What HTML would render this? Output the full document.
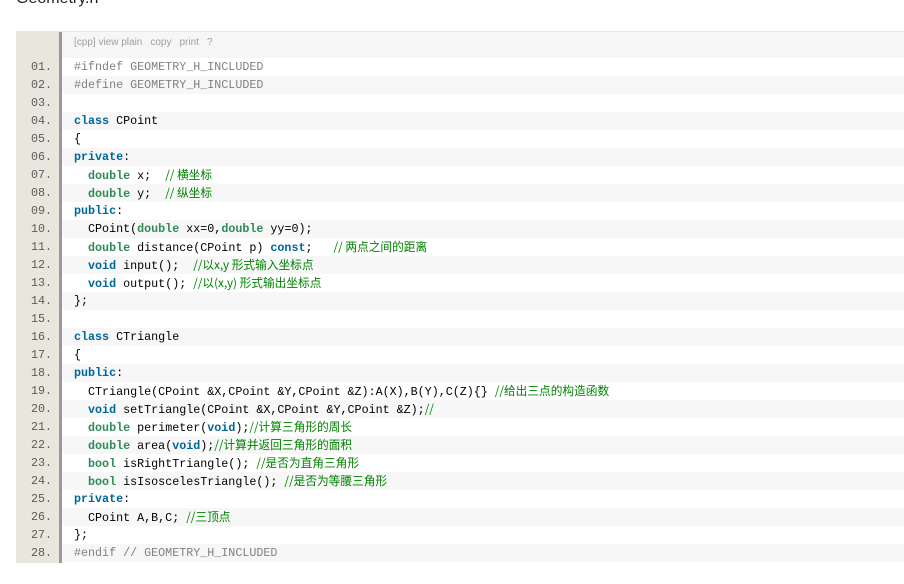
<!DOCTYPE html>
<html><head><meta charset="utf-8"><style>
body{margin:0;background:#fff;width:904px;height:584px;overflow:hidden;position:relative;font-family:"Liberation Sans",sans-serif}
.t{position:absolute;left:16px;top:-10px;font-size:16px;color:#222}
.blk{position:absolute;left:16px;top:31px;width:900px;border-top:1px solid #eeeadb}
.gut{position:absolute;left:0;top:0;width:43px;height:531px;background:#e8e6dd;border-right:3px solid #999;z-index:2}
.bar{height:26px;background:#f6f6f7;padding-left:58px;font-size:10px;color:#a0a0a0;line-height:22px}
.bar span{margin-right:8px}
.l{height:18px;line-height:18px;position:relative;margin-left:46px;font-family:"Liberation Mono","Noto Sans CJK SC",monospace;font-size:11.7px;color:#000;white-space:pre;background:#fff}
.l:nth-child(even){background:#f7f7f7}
.n{position:absolute;left:-46px;width:36px;text-align:right;color:#5c5c5c;z-index:3}
.c{position:absolute;left:12px}
.k{color:#069;font-weight:bold}
.d{color:#2e8b57;font-weight:bold}
.m{color:#008200;font-family:"Noto Sans CJK SC","Liberation Mono",sans-serif}
.p{color:#808080}
</style></head><body>
<div class="t">Geometry.h</div>
<div class="blk"><div class="gut"></div>
<div style="position:relative">
<div class="bar"><span>[cpp] view plain</span><span>copy</span><span>print</span><span>?</span></div>
<div>
<div class="l"><span class="n">01.</span><span class="c p">#ifndef GEOMETRY_H_INCLUDED</span></div>
<div class="l"><span class="n">02.</span><span class="c p">#define GEOMETRY_H_INCLUDED</span></div>
<div class="l"><span class="n">03.</span><span class="c"></span></div>
<div class="l"><span class="n">04.</span><span class="c"><span class="k">class</span> CPoint</span></div>
<div class="l"><span class="n">05.</span><span class="c">{</span></div>
<div class="l"><span class="n">06.</span><span class="c"><span class="k">private</span>:</span></div>
<div class="l"><span class="n">07.</span><span class="c">  <span class="d">double</span> x;  <span class="m">// 横坐标</span></span></div>
<div class="l"><span class="n">08.</span><span class="c">  <span class="d">double</span> y;  <span class="m">// 纵坐标</span></span></div>
<div class="l"><span class="n">09.</span><span class="c"><span class="k">public</span>:</span></div>
<div class="l"><span class="n">10.</span><span class="c">  CPoint(<span class="d">double</span> xx=0,<span class="d">double</span> yy=0);</span></div>
<div class="l"><span class="n">11.</span><span class="c">  <span class="d">double</span> distance(CPoint p) <span class="k">const</span>;   <span class="m">// 两点之间的距离</span></span></div>
<div class="l"><span class="n">12.</span><span class="c">  <span class="k">void</span> input();  <span class="m">//以x,y 形式输入坐标点</span></span></div>
<div class="l"><span class="n">13.</span><span class="c">  <span class="k">void</span> output(); <span class="m">//以(x,y) 形式输出坐标点</span></span></div>
<div class="l"><span class="n">14.</span><span class="c">};</span></div>
<div class="l"><span class="n">15.</span><span class="c"></span></div>
<div class="l"><span class="n">16.</span><span class="c"><span class="k">class</span> CTriangle</span></div>
<div class="l"><span class="n">17.</span><span class="c">{</span></div>
<div class="l"><span class="n">18.</span><span class="c"><span class="k">public</span>:</span></div>
<div class="l"><span class="n">19.</span><span class="c">  CTriangle(CPoint &amp;X,CPoint &amp;Y,CPoint &amp;Z):A(X),B(Y),C(Z){} <span class="m">//给出三点的构造函数</span></span></div>
<div class="l"><span class="n">20.</span><span class="c">  <span class="k">void</span> setTriangle(CPoint &amp;X,CPoint &amp;Y,CPoint &amp;Z);<span class="m">//</span></span></div>
<div class="l"><span class="n">21.</span><span class="c">  <span class="d">double</span> perimeter(<span class="k">void</span>);<span class="m">//计算三角形的周长</span></span></div>
<div class="l"><span class="n">22.</span><span class="c">  <span class="d">double</span> area(<span class="k">void</span>);<span class="m">//计算并返回三角形的面积</span></span></div>
<div class="l"><span class="n">23.</span><span class="c">  <span class="d">bool</span> isRightTriangle(); <span class="m">//是否为直角三角形</span></span></div>
<div class="l"><span class="n">24.</span><span class="c">  <span class="d">bool</span> isIsoscelesTriangle(); <span class="m">//是否为等腰三角形</span></span></div>
<div class="l"><span class="n">25.</span><span class="c"><span class="k">private</span>:</span></div>
<div class="l"><span class="n">26.</span><span class="c">  CPoint A,B,C; <span class="m">//三顶点</span></span></div>
<div class="l"><span class="n">27.</span><span class="c">};</span></div>
<div class="l"><span class="n">28.</span><span class="c p">#endif // GEOMETRY_H_INCLUDED</span></div>
</div></div></div>
</body></html>
